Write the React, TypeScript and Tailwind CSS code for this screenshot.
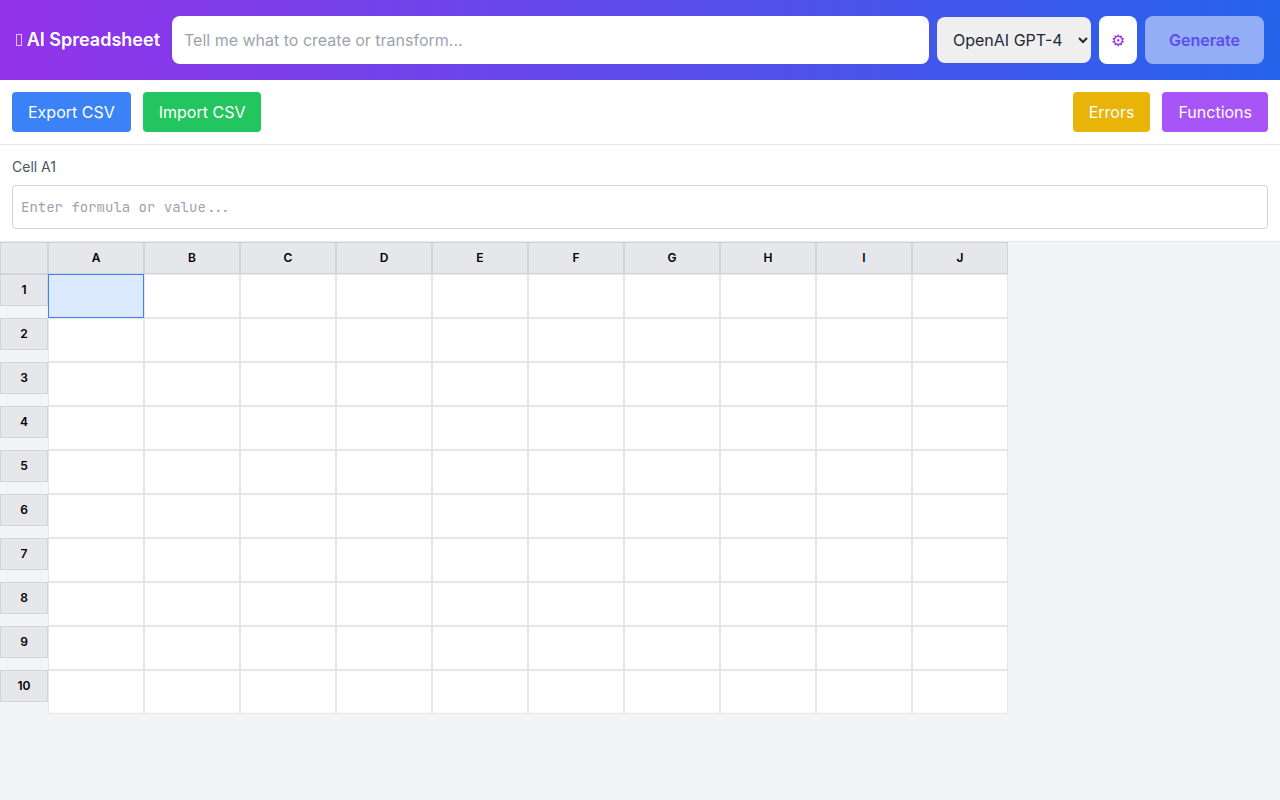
const cols = ["A", "B", "C", "D", "E", "F", "G", "H", "I", "J"];
const rows = [1, 2, 3, 4, 5, 6, 7, 8, 9, 10];

export default function App() {
  return (
    <div className="min-h-screen w-full bg-[#f3f4f6] font-['Inter',sans-serif]">
      <header className="h-20 flex items-center gap-2 p-4 bg-[linear-gradient(to_right,#9333ea,#2563eb)]">
        <div className="w-[144px] shrink-0 mr-1 flex items-center text-lg font-semibold text-white whitespace-nowrap">
          <span className="w-[6px] h-[12px] mr-[5px] border border-white/70" />
          AI Spreadsheet
        </div>
        <input
          placeholder="Tell me what to create or transform..."
          className="flex-1 min-w-0 h-12 px-3 rounded-lg bg-white text-base text-[#1f2937] placeholder:text-[#9ca3af] outline-none"
        />
        <select className="w-[154px] h-[46px] px-3 rounded-lg bg-[#efefef] text-base text-[#1f2937] outline-none">
          <option>OpenAI GPT-4</option>
        </select>
        <button className="w-[38px] h-12 rounded-lg bg-white text-base text-[#9333ea]">⚙</button>
        <button className="w-[119px] h-12 rounded-lg bg-[#93aef6] text-base font-semibold text-[#5b4ded]">Generate</button>
      </header>

      <div className="h-[65px] flex items-center justify-between px-3 pb-px bg-white border-b border-[#e5e7eb]">
        <div className="flex gap-3">
          <button className="h-10 px-4 rounded bg-[#3b82f6] text-base text-white">Export CSV</button>
          <button className="h-10 px-4 rounded bg-[#22c55e] text-base text-white">Import CSV</button>
        </div>
        <div className="flex gap-3">
          <button className="h-10 px-4 rounded bg-[#eab308] text-base text-white">Errors</button>
          <button className="h-10 px-4 rounded bg-[#a855f7] text-base text-white">Functions</button>
        </div>
      </div>

      <div className="h-[97px] px-3 pt-3 bg-white border-b border-[#e5e7eb]">
        <div className="h-5 mb-2 text-sm text-[#4b5563]">Cell A1</div>
        <input
          placeholder="Enter formula or value..."
          className="block w-full h-11 px-2 rounded border border-[#d1d5db] bg-white font-['JetBrains_Mono','Fira_Code','Noto_Sans_Mono',monospace] text-sm text-[#1f2937] placeholder:text-[#9ca3af] outline-none"
        />
      </div>

      <div>
        <div className="flex">
          <div className="w-12 h-8 bg-[#e5e7eb] border border-[#d1d5db]" />
          {cols.map((c) => (
            <div key={c} className="w-24 h-8 flex items-center justify-center bg-[#e5e7eb] border border-[#d1d5db] text-xs font-semibold text-black">
              {c}
            </div>
          ))}
        </div>
        {rows.map((r) => (
          <div key={r} className="flex items-start">
            <div className="w-12 h-8 flex items-center justify-center bg-[#e5e7eb] border border-[#d1d5db] text-xs font-semibold text-black">
              {r}
            </div>
            {cols.map((c) => (
              <div
                key={c}
                className={
                  r === 1 && c === "A"
                    ? "w-24 h-11 bg-[#dbeafe] border border-[#3b82f6]"
                    : "w-24 h-11 bg-white border border-[#e5e7eb]"
                }
              />
            ))}
          </div>
        ))}
      </div>
    </div>
  );
}
